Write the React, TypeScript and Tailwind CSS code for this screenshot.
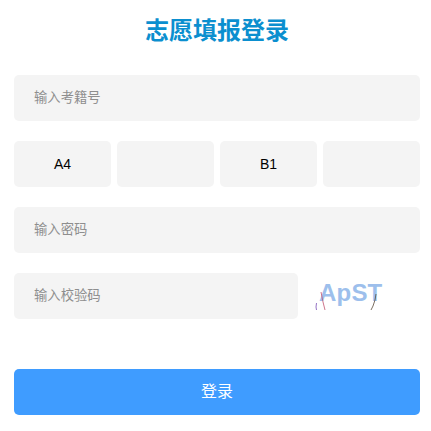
const font = "[font-family:'Liberation_Sans','Noto_Sans_CJK_SC',sans-serif]";

function Field({ placeholder, className = "" }: { placeholder: string; className?: string }) {
  return (
    <input
      placeholder={placeholder}
      readOnly
      className={`h-[46px] rounded-[5px] bg-[#f4f4f4] pb-[2px] pl-[20px] pr-2 text-[13.33px] text-black outline-none placeholder:text-[#8e8e8e] [font-family:'Liberation_Sans','Noto_Sans_CJK_SC',sans-serif] ${className}`}
    />
  );
}

function Cell({ value }: { value: string }) {
  return (
    <input
      value={value}
      readOnly
      className="h-[46px] w-full min-w-0 rounded-[5px] bg-[#f4f4f4] text-center text-[14px] text-black outline-none [font-family:'Liberation_Sans','Noto_Sans_CJK_SC',sans-serif]"
    />
  );
}

export default function App() {
  return (
    <div className={`flex h-[431px] w-[431px] flex-col overflow-hidden bg-white pl-[14px] pr-[11px] ${font}`}>
      <h1 className="mt-[15px] h-[32px] text-center text-[24px] font-bold leading-[32px] text-[#0b8fcf]">
        志愿填报登录
      </h1>
      <Field placeholder="输入考籍号" className="mt-[28px] w-full" />
      <div className="mt-[20px] grid grid-cols-4 gap-[6px]">
        <Cell value="A4" />
        <Cell value="" />
        <Cell value="B1" />
        <Cell value="" />
      </div>
      <Field placeholder="输入密码" className="mt-[20px] w-full" />
      <div className="mt-[20px] flex h-[46px] items-center">
        <Field placeholder="输入校验码" className="w-[284px]" />
        <div className="relative ml-[16px] h-[46px] w-[90px]">
          <span className="absolute left-[5px] top-0 text-[24px] font-bold leading-[40px] tracking-[0.2px] text-[#9dbfec] [font-family:'Liberation_Sans',sans-serif]">
            ApST
          </span>
          <svg className="absolute left-0 top-0" width="90" height="46" viewBox="0 0 90 46" fill="none">
            <path d="M2.5 37 L2 34 L2.5 30" stroke="#7a4fb5" strokeWidth="0.8" />
            <path d="M7 19 L9 29 L11 37" stroke="#c2536e" strokeWidth="0.8" />
            <path d="M57 37 L59 33 L61 27 L62 21" stroke="#5a4a3a" strokeWidth="0.8" />
          </svg>
        </div>
      </div>
      <button className="mt-[50px] h-[46px] w-full rounded-[5px] bg-[#3f9cff] text-[16px] text-white">
        登录
      </button>
    </div>
  );
}
